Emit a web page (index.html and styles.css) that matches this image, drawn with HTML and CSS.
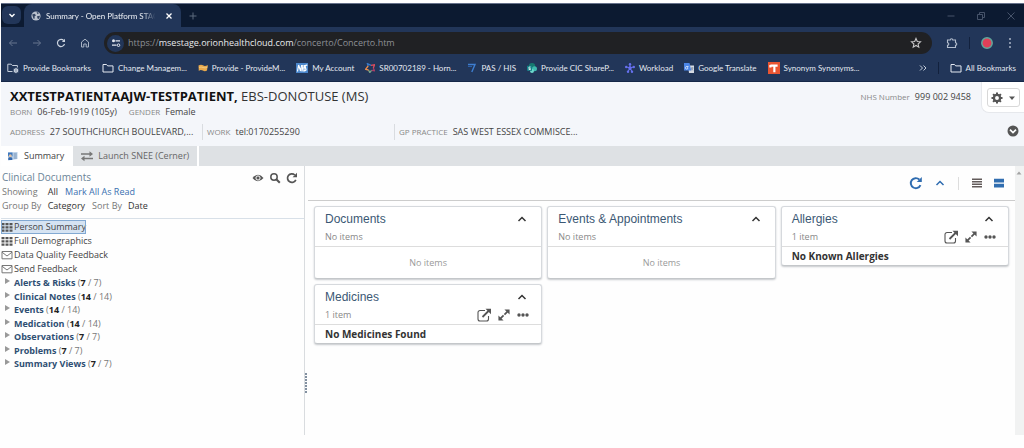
FILE: index.html
```html
<!DOCTYPE html>
<html lang="en">
<head>
<meta charset="utf-8">
<title>Summary - Open Platform</title>
<link rel="stylesheet" href="styles.css">
</head>
<body>
<svg class="defs" aria-hidden="true">
  <symbol id="chev-up" viewBox="0 0 10 10"><path d="M1.500 7 5 3.500 8.500 7" fill="none" stroke="currentColor" stroke-width="1.500"/></symbol>
  <symbol id="folder" viewBox="0 0 12 12"><path d="M1 2.500h3.500l1.200 1.400H11v6.100H1z" fill="none" stroke="currentColor" stroke-width="1" stroke-linejoin="round"/></symbol>
  <symbol id="open" viewBox="0 0 14 14"><path d="M8 2.500H3A2 2 0 0 0 1 4.500V11a2 2 0 0 0 2 2h6.500a2 2 0 0 0 2-2V8" fill="none" stroke="currentColor" stroke-width="1.100"/><path d="M5.500 9 12 2.500" stroke="currentColor" stroke-width="1.800"/><path d="M8.500.8H14v5.500z" fill="currentColor"/></symbol>
  <symbol id="expand" viewBox="0 0 14 14"><path d="m3 11 3.500-3.500M7.500 6.500 11 3" stroke="currentColor" stroke-width="2"/><path d="M7.500.5h6v6zM.5 7.500v6h6z" fill="currentColor"/></symbol>
  <symbol id="dots" viewBox="0 0 12 12"><g fill="currentColor"><circle cx="2" cy="6" r="1.700"/><circle cx="6" cy="6" r="1.700"/><circle cx="10" cy="6" r="1.700"/></g></symbol>
  <symbol id="grid" viewBox="0 0 12 12"><path d="M.5 2h3v2.300h-3zm4 0h3v2.300h-3zm4 0h3v2.300h-3zm-8 3.200h3v2.300h-3zm4 0h3v2.300h-3zm4 0h3v2.300h-3zm-8 3.200h3v2.300h-3zm4 0h3v2.300h-3zm4 0h3v2.300h-3z" fill="#555"/></symbol>
  <symbol id="mail" viewBox="0 0 12 12"><path d="M1 2.500h10v7.300H1z" fill="#fff" stroke="#777"/><path d="M1 3.200 6 7l5-3.800" fill="none" stroke="#777"/></symbol>
  <symbol id="reload" viewBox="0 0 12 12"><path d="M9.800 7.800A4.300 4.300 0 1 1 8.800 3" fill="none" stroke="currentColor" stroke-width="1.700"/><path d="M11 .8v4.400H6.600z" fill="currentColor"/></symbol>
</svg>

<header class="browser">
  <div class="tabstrip">
    <button class="tab-search" aria-label="Search tabs"><svg viewBox="0 0 10 10"><path d="m2.500 4 2.500 2.500L7.500 4" fill="none" stroke="#fff" stroke-width="1.400"/></svg></button>
    <div class="browser-tab">
      <svg class="i10" viewBox="0 0 10 10"><circle cx="5" cy="5" r="4.600" fill="#b9c1cd"/><path d="M1.200 3.500 3.500 2.800 5 4.200 3.500 5.500 3.800 7.500 2.500 7.800ZM5.500.8 8 2 6.500 3.200ZM6 5.200 9 4.800 8 8 6.500 7.500Z" fill="#31425f"/></svg>
      <span class="tab-title">Summary - Open Platform STAC</span>
      <button aria-label="Close tab"><svg class="i8" viewBox="0 0 8 8"><path d="m1.500 1.500 5 5m0-5-5 5" stroke="#fff" stroke-width="1.300"/></svg></button>
    </div>
    <button class="new-tab" aria-label="New tab"><svg class="i8" viewBox="0 0 8 8"><path d="M4 .5v7M.5 4h7" stroke="#5d6a7f"/></svg></button>
    <div class="window-controls">
      <button aria-label="Minimise"><svg class="i8" viewBox="0 0 8 8"><path d="M.5 4h7" stroke="#46536a"/></svg></button>
      <button aria-label="Restore"><svg class="i8" viewBox="0 0 8 8"><path d="M.5 2.500h5v5h-5zM2.500 2V.5h5v5H6" fill="none" stroke="#46536a"/></svg></button>
      <button aria-label="Close"><svg class="i8" viewBox="0 0 8 8"><path d="m.5.5 7 7m0-7-7 7" stroke="#46536a"/></svg></button>
    </div>
  </div>
  <div class="toolbar">
    <button aria-label="Back"><svg class="i10" viewBox="0 0 10 10"><path d="M9 5H1.500M4.500 2l-3 3 3 3" fill="none" stroke="#66758f"/></svg></button>
    <button aria-label="Forward"><svg class="i10" viewBox="0 0 10 10"><path d="M1 5h7.500M5.500 2l3 3-3 3" fill="none" stroke="#66758f"/></svg></button>
    <button aria-label="Reload"><svg class="i10" viewBox="0 0 10 10"><path d="M8.500 6A3.600 3.600 0 1 1 7.800 2.600" fill="none" stroke="#cbd3df" stroke-width="1.200"/><path d="M9 .8V4H5.800z" fill="#cbd3df"/></svg></button>
    <button aria-label="Home"><svg class="i10" viewBox="0 0 10 10"><path d="M1.500 4 5 1.200 8.500 4v5H6.200V6H3.800v3H1.500z" fill="none" stroke="#a9b4c5"/></svg></button>
    <div class="omnibox">
      <button class="site-info" aria-label="Site information"><svg class="i10" viewBox="0 0 10 10"><path d="M4.500 2.800H9M1 7.200h4.500" stroke="#e4e8ef" stroke-width="1.200"/><circle cx="2.500" cy="2.800" r="1.500" fill="#e4e8ef"/><circle cx="7.500" cy="7.200" r="1.300" fill="none" stroke="#e4e8ef"/></svg></button>
      <a class="url" href="#">https://<b>msestage.orionhealthcloud.com</b>/concerto/Concerto.htm</a>
      <button aria-label="Bookmark this page"><svg class="i12" viewBox="0 0 12 12"><path d="m6 1.500 1.300 3 3.200.3L8.100 7l.7 3.200L6 8.500l-2.800 1.700L3.900 7 1.500 4.800l3.200-.3z" fill="none" stroke="#c7c7c9" stroke-width="1.100"/></svg></button>
    </div>
    <div class="toolbar-end">
      <button aria-label="Extensions"><svg class="i12" viewBox="0 0 12 12"><path d="M1.500 3h2.700a1.300 1.300 0 0 1 2.600 0h2.700v2.700a1.300 1.300 0 0 1 0 2.600v2.200h-8V8.300a1.300 1.300 0 0 0 0-2.600z" fill="none" stroke="#b3bdcd" stroke-width="1.100"/></svg></button>
      <span class="bar-sep"></span>
      <button aria-label="Profile"><svg class="i12" viewBox="0 0 12 12"><circle cx="6" cy="6" r="5.200" fill="#df4058" stroke="#5fa89c" stroke-width="1.500"/></svg></button>
      <button aria-label="Menu"><svg class="i12" viewBox="0 0 12 12"><g fill="#aab5c6"><circle cx="6" cy="2" r="1"/><circle cx="6" cy="6" r="1"/><circle cx="6" cy="10" r="1"/></g></svg></button>
    </div>
  </div>
  <nav class="bookmarks" aria-label="Bookmarks">
    <a href="#"><svg class="i12" viewBox="0 0 12 12"><path d="M5.500 9.500H.8V2.200h3.400l1.200 1.300h5v2" fill="none" stroke="#c5cedb"/><circle cx="9" cy="8.500" r="1.700" fill="none" stroke="#c5cedb" stroke-width="1.300"/><path d="M9 5.700v5.600M6.600 7.100l4.800 2.800M11.400 7.100 6.600 9.900" stroke="#c5cedb" stroke-width=".6"/></svg>Provide Bookmarks</a>
    <a href="#"><svg class="i12"><use href="#folder"/></svg>Change Managem...</a>
    <a href="#"><svg class="i10" viewBox="0 0 10 10"><path d="M.5 2.500Q3 1 5 2.300T9.800 2L9 7.500Q7 9 4.800 7.600T.8 8z" fill="#e8a94c"/><path d="M1 4.500Q3 3.500 5 4.500t4.500-.5" stroke="#f4c97d" fill="none"/></svg>Provide - ProvideM...</a>
    <a href="#"><svg class="i12" viewBox="0 0 12 12"><path d="M0 1h12v10H0z" fill="#4b87cc"/><path d="M1.500 9.500 2.600 3l2 6L5.700 3M7 3 6 9.500M8.700 3l-1 6.500M7 6h1.500M11.300 3.300Q8.700 2.700 9.300 5t.8 2.700-2 1.300" fill="none" stroke="#fff" stroke-width="1.200"/></svg>My Account</a>
    <a href="#"><svg class="i10" viewBox="0 0 10 10"><g fill="none" stroke-width="1.300"><path d="M3.200 3 2.400.6 6 2.300" stroke="#3979c8"/><path d="m6 2.300 3.600-.5-1.300 3.100" stroke="#df4d5c"/><path d="m8.300 4.900 1.200 2.800-3-.3" stroke="#a93e69"/><path d="M6.500 7.400 4.800 9.600 3.500 7" stroke="#79a488"/><path d="M3.500 7 .5 6.300 3.200 3" stroke="#f18d4b"/></g></svg>SR00702189 - Horn...</a>
    <a href="#"><svg class="i10" viewBox="0 0 10 10"><path d="M1 1.500h7L4.800 9" fill="none" stroke="#3e7ed0" stroke-width="1.400"/><path d="M1 3.500h4" stroke="#2c5fa8"/></svg>PAS / HIS</a>
    <a href="#"><svg class="i10" viewBox="0 0 10 10"><circle cx="5" cy="3.200" r="3.200" fill="#16786f"/><circle cx="7.500" cy="5.800" r="2.500" fill="#3eb9ae"/><circle cx="5" cy="8" r="2" fill="#6ed8cd"/><path d="M0 2.800h5v5H0z" fill="#128087"/><path d="M3.700 4Q1.500 3.500 1.800 5t1.800 1-2 .8" fill="none" stroke="#fff" stroke-width=".8"/></svg>Provide CIC ShareP...</a>
    <a href="#"><svg class="i10" viewBox="0 0 10 10"><path d="M5 5V1.500M5 5 1.500 4M5 5l3.500-1M5 5 3 8.500M5 5l2 3.500" stroke="#6670ee" stroke-width="1.100"/><g fill="#6670ee"><circle cx="5" cy="5" r="1.700"/><circle cx="5" cy="1.200" r="1.200"/><circle cx="1.200" cy="4" r="1.200"/><circle cx="8.800" cy="4" r="1.200"/><circle cx="3" cy="8.700" r="1.200"/><circle cx="7" cy="8.700" r="1.200"/></g></svg>Workload</a>
    <a href="#"><svg class="i10" viewBox="0 0 10 10"><path d="M4 2.500h6V10H5z" fill="#d5dae2"/><path d="M0 0h5.500L7.300 7.500H0z" fill="#4c86e8"/><path d="M4.500 3.500H2.800a1.300 1.300 0 1 0 1 2V4.700H3" fill="none" stroke="#fff" stroke-width=".7"/><path d="M7 5h2.500M8.300 4.300C8.300 6 7.500 7 7 7.500M7.500 5.500 9 7.500" stroke="#65728a" fill="none" stroke-width=".6"/></svg>Google Translate</a>
    <a href="#"><svg class="i12" viewBox="0 0 10 10"><path d="M0 0h10v10H0z" fill="#e95532"/><path d="M2 3h6M5.300 3v5.500M2 2.500v2" stroke="#fff" stroke-width="1.800"/></svg>Synonym Synonyms...</a>
    <button class="more" aria-label="More bookmarks"><svg class="i8" viewBox="0 0 8 8"><path d="m1 1.500 2.500 2.500L1 6.500m3.500-5L7 4 4.500 6.500" fill="none" stroke="#c5cedb"/></svg></button>
    <span class="bar-sep"></span>
    <a href="#"><svg class="i12"><use href="#folder"/></svg>All Bookmarks</a>
  </nav>
</header>

<section class="patient">
  <div class="identity">
    <h1><b>XXTESTPATIENTAAJW-TESTPATIENT,</b> EBS-DONOTUSE (MS)</h1>
    <p class="facts"><span class="label">BORN</span>06-Feb-1919 (105y)<span class="label second">GENDER</span>Female</p>
    <ul class="contact">
      <li><span class="label">ADDRESS</span>27 SOUTHCHURCH BOULEVARD,...</li>
      <li><span class="label">WORK</span>tel:0170255290</li>
      <li><span class="label">GP PRACTICE</span>SAS WEST ESSEX COMMISCE...</li>
    </ul>
  </div>
  <p class="nhs"><span class="label">NHS Number</span>999 002 9458</p>
  <div class="patient-tools">
    <div class="gear-box"><button class="gear" aria-label="Settings"><svg class="i12" viewBox="0 0 12 12"><circle cx="6" cy="6" r="3.100" fill="none" stroke="#555" stroke-width="2.300"/><path d="M6 .5v2M6 9.500v2M.5 6h2M9.500 6h2M2.100 2.100l1.400 1.400M8.500 8.500l1.400 1.400M9.900 2.100 8.500 3.500M3.500 8.500 2.100 9.900" stroke="#555" stroke-width="2"/></svg><svg class="i8" viewBox="0 0 8 8"><path d="M1 2.500h6L4 6z" fill="#555"/></svg></button></div>
    <button aria-label="Show more details"><svg class="i12" viewBox="0 0 12 12"><circle cx="6" cy="6" r="5.500" fill="#555"/><path d="M3 4.700 6 7.500l3-2.800" fill="none" stroke="#fff" stroke-width="1.700"/></svg></button>
  </div>
</section>

<nav class="app-tabs" aria-label="Patient views">
  <a class="active" href="#"><svg class="i12" viewBox="0 0 12 12"><path d="M1 2.500 10.500 2v7L1 10.500z" fill="#b8cfe8"/><path d="M1 2.500h4.500v3.800H1z" fill="#3f78be"/><path d="M1.300 10V8q2-2 4 0v2z" fill="#3267ad"/><circle cx="3.300" cy="5.700" r="1.500" fill="#e1c3a4"/><path d="M6.800 4h3M6.800 6h3M6.800 8h3" stroke="#7894b5"/></svg>Summary</a>
  <a href="#"><svg class="i12" viewBox="0 0 12 12"><path d="M0 4h9M3 8.500h9" stroke="#777" stroke-width="1.500"/><path d="M8.500 1.300 12 4 8.500 6.700zM3.500 5.800 0 8.500l3.500 2.700z" fill="#777"/></svg>Launch SNEE (Cerner)</a>
</nav>

<div class="workspace">
  <aside class="sidebar">
    <div class="side-head">
      <div class="side-title">
        <h2>Clinical Documents</h2>
        <button aria-label="Show or hide"><svg class="i12" viewBox="0 0 12 12"><path d="M.5 6Q6-.5 11.500 6 6 12.500.5 6z" fill="#555"/><circle cx="6" cy="6" r="2.100" fill="none" stroke="#fff"/></svg></button>
        <button aria-label="Search documents"><svg class="i12" viewBox="0 0 12 12"><circle cx="5" cy="5" r="3.200" fill="none" stroke="#555" stroke-width="1.500"/><path d="m7.300 7.300 3.500 3.500" stroke="#555" stroke-width="2"/></svg></button>
        <button aria-label="Refresh documents"><svg class="i12"><use href="#reload"/></svg></button>
      </div>
      <p>Showing <a class="strong" href="#">All</a><a class="mark" href="#">Mark All As Read</a></p>
      <p>Group By <a class="value" href="#">Category</a><span class="sort">Sort By</span><a class="value" href="#">Date</a></p>
    </div>
    <ul class="links">
      <li><a class="selected" href="#"><svg class="i12"><use href="#grid"/></svg>Person Summary</a></li>
      <li><a href="#"><svg class="i12"><use href="#grid"/></svg>Full Demographics</a></li>
      <li><a href="#"><svg class="i12"><use href="#mail"/></svg>Data Quality Feedback</a></li>
      <li><a href="#"><svg class="i12"><use href="#mail"/></svg>Send Feedback</a></li>
    </ul>
    <ul class="tree">
      <li><a href="#">Alerts &amp; Risks</a> (<b>7</b> / 7)</li>
      <li><a href="#">Clinical Notes</a> (<b>14</b> / 14)</li>
      <li><a href="#">Events</a> (<b>14</b> / 14)</li>
      <li><a href="#">Medication</a> (<b>14</b> / 14)</li>
      <li><a href="#">Observations</a> (<b>7</b> / 7)</li>
      <li><a href="#">Problems</a> (<b>7</b> / 7)</li>
      <li><a href="#">Summary Views</a> (<b>7</b> / 7)</li>
    </ul>
  </aside>
  <div class="splitter"></div>
  <main>
    <div class="view-bar">
      <button class="blue" aria-label="Refresh"><svg class="i14" viewBox="0 0 12 12"><use href="#reload"/></svg></button>
      <button class="blue" aria-label="Collapse all"><svg class="i10"><use href="#chev-up"/></svg></button>
      <span class="view-sep"></span>
      <button aria-label="Compact view"><svg class="i10" viewBox="0 0 10 10"><path d="M0 1.200h10M0 3.700h10M0 6.200h10M0 8.700h10" stroke="#625b5a" stroke-width="1.600"/></svg></button>
      <button aria-label="Card view"><svg class="i10" viewBox="0 0 10 10"><path d="M0 .8h10v3.700H0zm0 4.900h10v3.700H0z" fill="#316eb0"/></svg></button>
    </div>
    <div class="cards">
      <div class="column">
        <article class="card">
          <header><h3>Documents</h3><button aria-label="Collapse"><svg class="i10"><use href="#chev-up"/></svg></button></header>
          <div class="sub"><span>No items</span></div>
          <p class="empty">No items</p>
        </article>
        <article class="card">
          <header><h3>Medicines</h3><button aria-label="Collapse"><svg class="i10"><use href="#chev-up"/></svg></button></header>
          <div class="sub"><span>1 item</span><button aria-label="Open"><svg class="i14"><use href="#open"/></svg></button><button aria-label="Expand"><svg class="i12"><use href="#expand"/></svg></button><button aria-label="More"><svg class="i12"><use href="#dots"/></svg></button></div>
          <p class="entry">No Medicines Found</p>
        </article>
      </div>
      <div class="column">
        <article class="card">
          <header><h3>Events &amp; Appointments</h3><button aria-label="Collapse"><svg class="i10"><use href="#chev-up"/></svg></button></header>
          <div class="sub"><span>No items</span></div>
          <p class="empty">No items</p>
        </article>
      </div>
      <div class="column">
        <article class="card">
          <header><h3>Allergies</h3><button aria-label="Collapse"><svg class="i10"><use href="#chev-up"/></svg></button></header>
          <div class="sub"><span>1 item</span><button aria-label="Open"><svg class="i14"><use href="#open"/></svg></button><button aria-label="Expand"><svg class="i12"><use href="#expand"/></svg></button><button aria-label="More"><svg class="i12"><use href="#dots"/></svg></button></div>
          <p class="entry">No Known Allergies</p>
        </article>
      </div>
    </div>
  </main>
  <div class="scroll-track"><svg class="i8" viewBox="0 0 8 8"><path d="M1.500 5.500 4 2.500l2.500 3z" fill="#a3a3a3"/></svg></div>
</div>
</body>
</html>
```

FILE: styles.css
```css
* { box-sizing: border-box; }
body {
  margin: 0;
  min-height: 100vh;
  padding: 3px 0 13px 1px;
  display: flex;
  flex-direction: column;
  background: #fefefe;
  color: #444;
  font: 9px/14px "Open Sans", "Noto Sans", sans-serif;
}
h1, h2, h3, p, ul { margin: 0; padding: 0; font-weight: 400; }
ul { list-style: none; }
a { color: inherit; text-decoration: none; }
button { padding: 0; border: 0; background: none; color: inherit; font: inherit; display: flex; align-items: center; }
svg { flex: none; display: block; }
.defs { display: none; }
.i8 { width: 8px; height: 8px; }
.i10 { width: 10px; height: 10px; }
.i12 { width: 12px; height: 12px; }
.i14 { width: 14px; height: 14px; }

/* Browser chrome */
.browser { background: #223659; border-top: 1px solid #66718a; border-bottom: 1px solid #152747; }
.tabstrip { display: flex; height: 23px; background: #0c1a31; }
.tab-search { width: 19px; height: 18px; margin: 2px 0 0 1px; border-radius: 6px; background: #223659; justify-content: center; }
.tab-search svg { width: 10px; height: 10px; }
.browser-tab { display: flex; align-items: center; gap: 5px; width: 157px; margin-left: 3px; padding: 0 8px 0 7px; border-radius: 8px 8px 0 0; background: #223659; color: #eef1f6; }
.tab-title { flex: 1; font: 8px/14px Lato, sans-serif; white-space: nowrap; mask-image: linear-gradient(90deg, #000 84%, transparent 96%); }
.new-tab { margin-left: 8px; }
.window-controls { display: flex; gap: 22px; margin-left: auto; padding-right: 9px; }
.toolbar { display: flex; align-items: center; gap: 14px; padding: 5px 8px 0 7px; }
.omnibox { flex: 1; display: flex; align-items: center; height: 22px; padding: 0 10px 0 3px; border-radius: 11px; background: #202124; }
.site-info { width: 17px; height: 17px; border-radius: 9px; background: #223659; justify-content: center; }
.url { flex: 1; margin-left: 4px; color: #8d9095; }
.url b { color: #e8eaed; font-weight: 400; }
.toolbar-end { display: flex; align-items: center; gap: 11px; }
.bar-sep { width: 1px; height: 12px; background: #12213d; }
.bookmarks { display: flex; align-items: center; gap: 11px; height: 27px; padding: 0 8px 0 6px; color: #e4e9f1; font: 8px/14px Lato, sans-serif; white-space: nowrap; }
.bookmarks a { display: flex; align-items: center; gap: 4px; }
.more { margin-left: auto; }

/* Patient banner */
.patient { display: flex; background: #f4f6fa; }
.identity { flex: 1; min-width: 0; padding: 5px 0 6px 9px; }
.patient h1 { color: #333; font-size: 13px; line-height: 18px; white-space: nowrap; }
.patient h1 b { color: #111; }
.label { margin-right: 5px; color: #888; font-size: 8px; }
.label.second { margin-left: 12px; }
.contact { display: flex; margin-top: 5px; line-height: 16px; white-space: nowrap; }
.contact li { width: 192px; }
.contact li + li { padding-left: 4px; border-left: 1px solid #d9dce0; }
.nhs { padding: 8px 10px 0 0; }
.patient-tools { width: 43px; display: flex; flex-direction: column; justify-content: space-between; align-items: flex-end; padding-bottom: 9px; }
.patient-tools > button { margin-right: 5px; }
.gear-box { width: 100%; padding: 6px 4px 5px 5px; border: solid #e6e8ec; border-width: 0 0 1px 1px; border-radius: 0 0 0 8px; background: #fff; }
.gear { width: 100%; height: 19px; justify-content: center; gap: 5px; border: 1px solid #d8d8d8; border-radius: 3px; }

/* View tabs */
.app-tabs { display: flex; height: 20px; background: #dee1e4; }
.app-tabs a { display: flex; align-items: center; gap: 5px; padding: 0 8px; border-right: 2px solid #fff; color: #666; }
.app-tabs .active { padding: 0 9px 0 6px; background: #fff; border-right: 0; color: #444; }

/* Sidebar */
.workspace { flex: 1; display: flex; }
.sidebar { width: 303px; }
.side-head { padding: 4px 6px 5px 1px; border-bottom: 1px solid #d8e0e8; color: #777; line-height: 14px; }
.side-title { display: flex; gap: 5px; color: #555; }
.side-title h2 { flex: 1; color: #6b8497; font-size: 10px; line-height: 15px; }
.strong { margin: 0 7px 0 8px; color: #333; }
.mark { color: #3a70b0; }
.value { margin-left: 4px; color: #333; }
.sort { margin: 0 2px 0 7px; }
.links a { display: inline-flex; align-items: center; gap: 1px; height: 14px; color: #444; vertical-align: top; }
.links li { height: 14px; }
.links { padding-top: 1px; }
.links .selected { background: #d5e3f2; outline: 1px solid #82a9d2; outline-offset: -1px; }
.tree { display: grid; grid-auto-rows: 1fr; min-height: 95px; color: #777; }
.tree li { line-height: 13px; }
.tree li::before { content: ""; display: inline-block; margin: 0 4px 2px 4px; border: solid transparent; border-width: 3px 0 3px 5px; border-left-color: #999; }
.tree a { color: #2f4f73; font-weight: 700; }
.tree b { color: #222; }
.splitter { width: 4px; border-left: 1px solid #d9dcdf; display: flex; flex-direction: column; justify-content: flex-end; }
.splitter::after { content: ""; height: 21px; width: 2px; margin-bottom: 41px; background: repeating-linear-gradient(#8290a0 0 2px, transparent 2px 3px); }

/* Cards */
main { flex: 1; min-width: 0; }
.view-bar { display: flex; justify-content: flex-end; align-items: center; gap: 12px; height: 35px; padding-right: 11px; border-bottom: 1px solid #ccc; }
.blue { color: #2f6cb0; }
.view-sep { width: 1px; height: 13px; margin: 0 1px; background: #ddd; }
.cards { display: grid; grid-template-columns: repeat(3, 1fr); gap: 5px; padding: 5px 6px; align-items: start; }
.column { display: grid; gap: 5px; }
.card { border: 1px solid #d6d9dd; border-bottom-color: #c4c7ca; border-radius: 3px; background: #fff; box-shadow: 0 1px 2px #c5c8cc; }
.card header { display: flex; justify-content: space-between; align-items: center; padding: 4px 14px 1px 10px; color: #333; }
.card h3 { color: #3b5874; font: 12px/16px "Liberation Sans", Arial, sans-serif; }
.sub { display: flex; align-items: center; gap: 7px; height: 19px; padding: 0 12px 0 10px; border-bottom: 1px solid #ddd; color: #555; }
.sub span { flex: 1; color: #888; }
.empty { padding: 9px 0 8px; color: #999; text-align: center; }
.entry { padding: 2px 10px; color: #333; font-size: 10px; font-weight: 700; }
.scroll-track { width: 9px; padding-top: 3px; background: #f1f2f2; }
```
